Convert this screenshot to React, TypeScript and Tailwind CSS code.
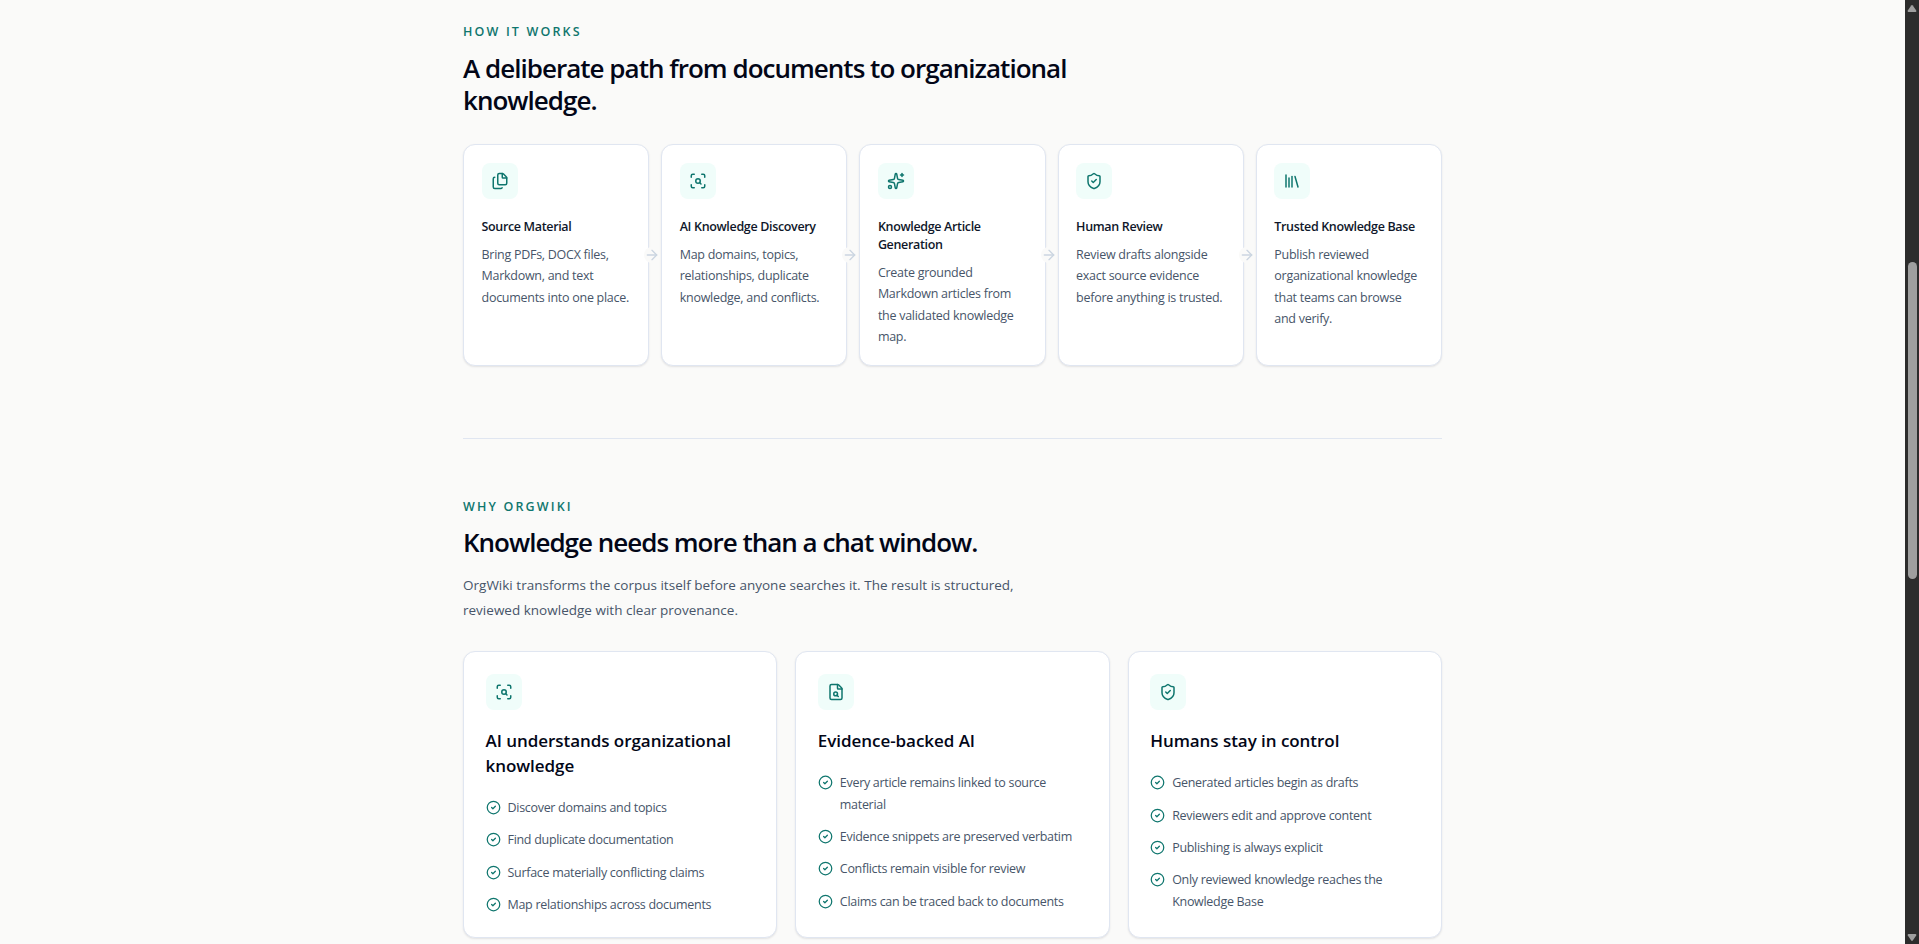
import React from "react";
import type { LucideIcon } from "lucide-react";
import {
  ArrowRight,
  CircleCheck,
  FileSearch,
  Files,
  Library,
  ScanSearch,
  ShieldCheck,
  Sparkles,
} from "lucide-react";

interface Step {
  icon: LucideIcon;
  title: string;
  description: string;
}

interface Benefit {
  icon: LucideIcon;
  title: string;
  points: string[];
}

const steps: Step[] = [
  {
    icon: Files,
    title: "Source Material",
    description: "Bring PDFs, DOCX files, Markdown, and text documents into one place.",
  },
  {
    icon: ScanSearch,
    title: "AI Knowledge Discovery",
    description: "Map domains, topics, relationships, duplicate knowledge, and conflicts.",
  },
  {
    icon: Sparkles,
    title: "Knowledge Article Generation",
    description: "Create grounded Markdown articles from the validated knowledge map.",
  },
  {
    icon: ShieldCheck,
    title: "Human Review",
    description: "Review drafts alongside exact source evidence before anything is trusted.",
  },
  {
    icon: Library,
    title: "Trusted Knowledge Base",
    description: "Publish reviewed organizational knowledge that teams can browse and verify.",
  },
];

const benefits: Benefit[] = [
  {
    icon: ScanSearch,
    title: "AI understands organizational knowledge",
    points: [
      "Discover domains and topics",
      "Find duplicate documentation",
      "Surface materially conflicting claims",
      "Map relationships across documents",
    ],
  },
  {
    icon: FileSearch,
    title: "Evidence-backed AI",
    points: [
      "Every article remains linked to source material",
      "Evidence snippets are preserved verbatim",
      "Conflicts remain visible for review",
      "Claims can be traced back to documents",
    ],
  },
  {
    icon: ShieldCheck,
    title: "Humans stay in control",
    points: [
      "Generated articles begin as drafts",
      "Reviewers edit and approve content",
      "Publishing is always explicit",
      "Only reviewed knowledge reaches the Knowledge Base",
    ],
  },
];

const IconTile: React.FC<{ icon: LucideIcon }> = ({ icon: Icon }) => (
  <span className="flex h-9 w-9 items-center justify-center rounded-lg bg-teal-50 text-[#0f766e]">
    <Icon size={18} />
  </span>
);

const Eyebrow: React.FC<{ children: React.ReactNode }> = ({ children }) => (
  <p className="text-[12.5px] leading-[18px] font-semibold tracking-[2.15px] text-[#0f766e] uppercase">
    {children}
  </p>
);

const StepCard: React.FC<{ step: Step; isLast: boolean }> = ({ step, isLast }) => (
  <li className="relative rounded-xl border border-[#e0e6f1] bg-white px-[17.5px] py-[18px] shadow-[0_1px_2px_rgba(15,23,42,0.1)]">
    <IconTile icon={step.icon} />
    <h3 className="mt-[19px] text-[12.5px] leading-[17.9px] font-semibold tracking-[-0.34px] text-[#0f172a]">
      {step.title}
    </h3>
    <p className="mt-2 text-[12.5px] leading-[21.45px] tracking-[-0.27px] text-[#475569]">
      {step.description}
    </p>
    {!isLast && (
      <ArrowRight
        size={16}
        className="absolute top-1/2 -right-3 z-10 -translate-y-1/2 rounded-full bg-[#fafaf9] text-[#cbd5e1]"
      />
    )}
  </li>
);

const BenefitCard: React.FC<{ benefit: Benefit }> = ({ benefit }) => (
  <article className="rounded-xl border border-[#e0e6f1] bg-white px-[21.5px] pt-[22px] pb-[21px] shadow-[0_1px_2px_rgba(15,23,42,0.1)]">
    <IconTile icon={benefit.icon} />
    <h3 className="mt-[19px] text-[17px] leading-[24.8px] font-semibold tracking-[-0.05px] text-[#020617]">
      {benefit.title}
    </h3>
    <ul className="mt-[18px] flex flex-col gap-[11px]">
      {benefit.points.map((point) => (
        <li
          key={point}
          className="flex gap-[7px] text-[12.5px] leading-[21.45px] tracking-[-0.3px] text-[#475569]"
        >
          <CircleCheck size={15} className="mt-[3px] shrink-0 text-[#0f766e]" />
          <span>{point}</span>
        </li>
      ))}
    </ul>
  </article>
);

const Scrollbar: React.FC = () => (
  <div className="flex w-[14px] shrink-0 flex-col items-center bg-[#2c2c2c]">
    <svg width="14" height="17" viewBox="0 0 14 17" fill="#9f9f9f">
      <path d="M6.2 5.4 Q7 4.6 7.8 5.4 L11.2 10.4 Q11.8 12 10.5 12 H3.5 Q2.2 12 2.8 10.4 Z" />
    </svg>
    <div className="mt-[245px] h-[317px] w-[9px] rounded-full bg-[#9f9f9f]" />
    <svg className="mt-auto" width="14" height="17" viewBox="0 0 14 17" fill="#9f9f9f">
      <path d="M6.2 13.6 Q7 14.4 7.8 13.6 L11.2 8.6 Q11.8 7 10.5 7 H3.5 Q2.2 7 2.8 8.6 Z" />
    </svg>
  </div>
);

const App: React.FC = () => {
  return (
    <div className="flex h-[944px] overflow-hidden bg-[#fafaf9] font-['Open_Sans','Noto_Sans',sans-serif]">
      <main className="flex-1">
        <div className="mx-auto w-[979px] pt-[23px]">
          <section>
            <Eyebrow>How it works</Eyebrow>
            <h2 className="mt-[11px] w-[640px] text-[26px] leading-[32.4px] font-semibold tracking-[-0.98px] text-[#020617]">
              A deliberate path from documents to organizational knowledge.
            </h2>
            <ol className="mt-[27px] grid grid-cols-5 gap-3">
              {steps.map((step, i) => (
                <StepCard key={step.title} step={step} isLast={i === steps.length - 1} />
              ))}
            </ol>
          </section>

          <section className="mt-[72px] border-t border-[#e0e6f1] pt-[59px]">
            <Eyebrow>Why OrgWiki</Eyebrow>
            <h2 className="mt-[10px] text-[26px] leading-[32.4px] font-semibold tracking-[-1px] text-[#020617]">
              Knowledge needs more than a chat window.
            </h2>
            <p className="mt-[14px] w-[590px] text-[13.5px] leading-[25.2px] tracking-[0.01px] text-[#475569]">
              OrgWiki transforms the corpus itself before anyone searches it. The result is
              structured, reviewed knowledge with clear provenance.
            </p>
            <div className="mt-[28px] grid grid-cols-3 gap-[18px]">
              {benefits.map((benefit) => (
                <BenefitCard key={benefit.title} benefit={benefit} />
              ))}
            </div>
          </section>
        </div>
      </main>
      <Scrollbar />
    </div>
  );
};

export default App;
